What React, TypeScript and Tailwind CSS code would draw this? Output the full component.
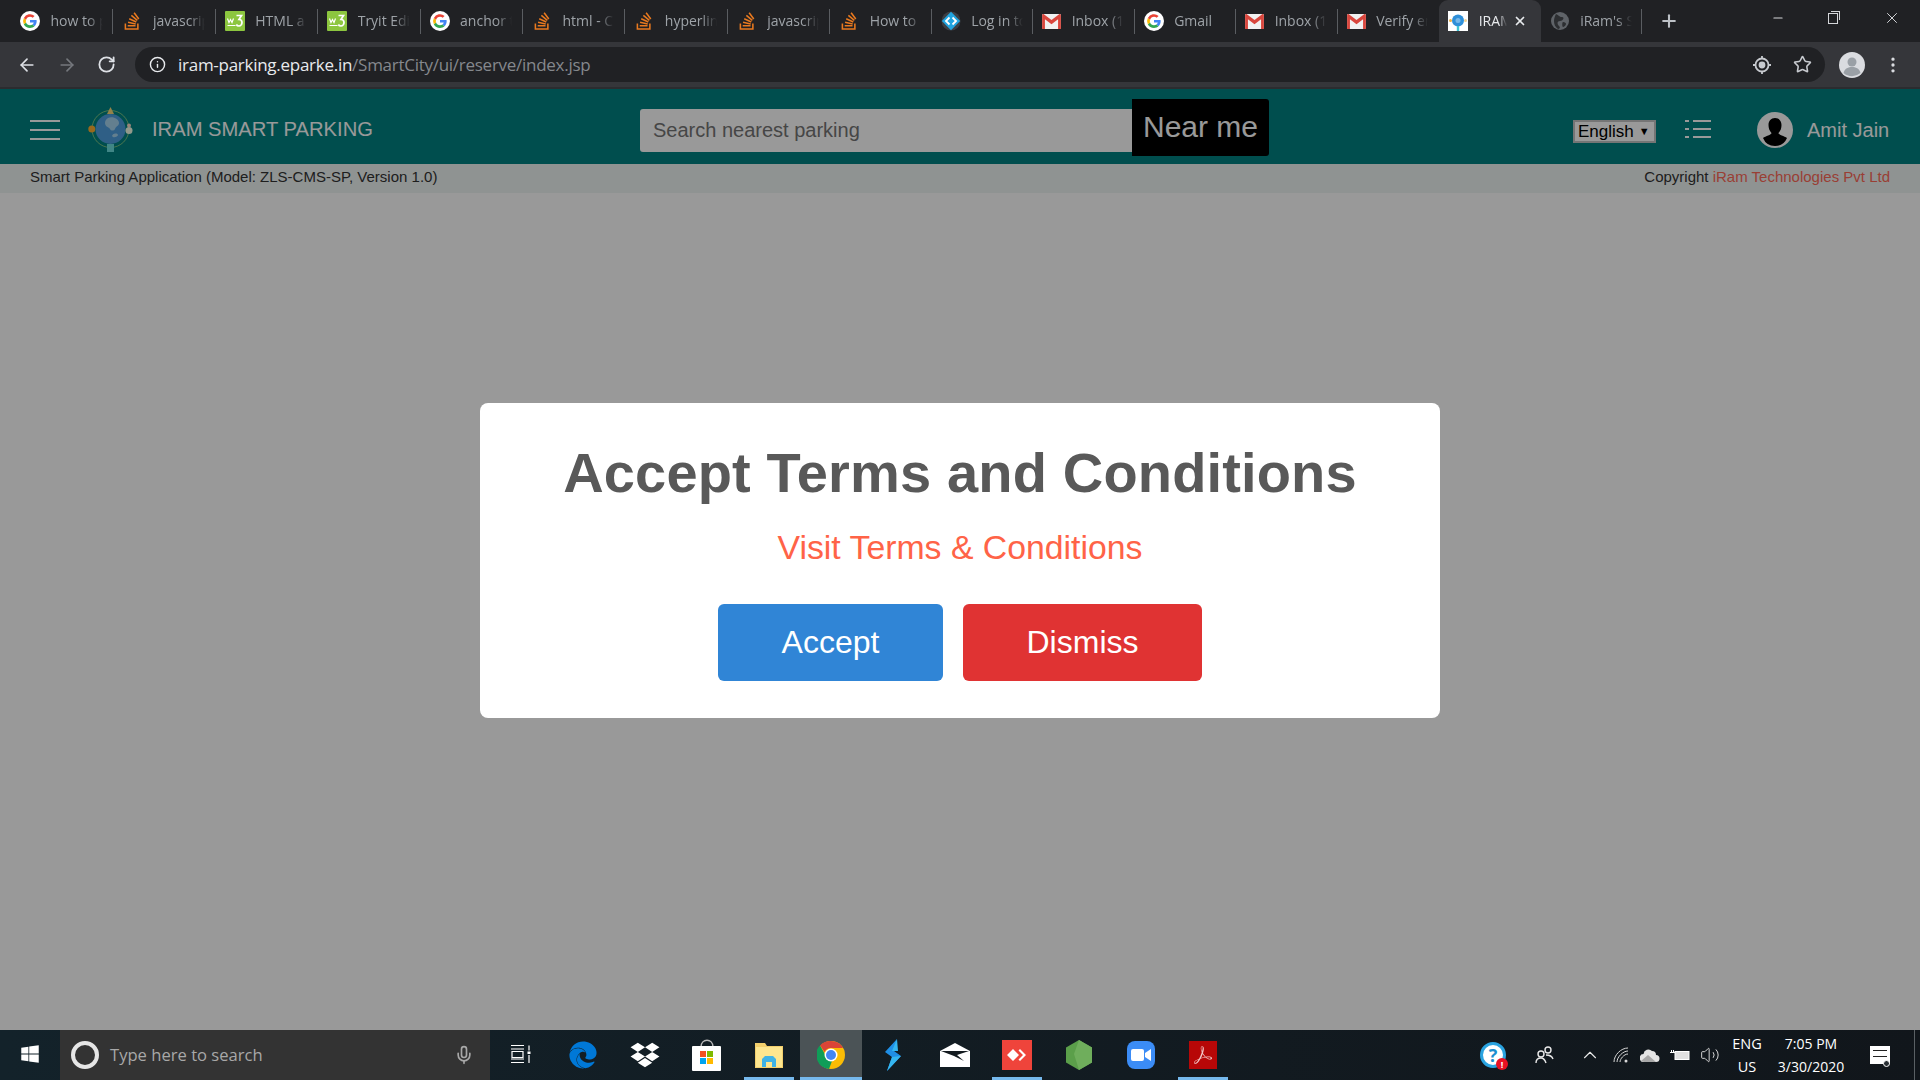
import { ArrowLeft, ArrowRight, RotateCw, Info, Star, Plus, X, Minus, MoreVertical, Mic, ChevronUp, Volume2 } from 'lucide-react'
import { FaStackOverflow, FaDropbox, FaEdge, FaWindows } from 'react-icons/fa'
import { SiAdobeacrobatreader } from 'react-icons/si'

const UI_FONT = "font-['Open_Sans',sans-serif]"

function GoogleIcon() {
  return (
    <svg viewBox="0 0 24 24" className="w-5 h-5">
      <circle cx="12" cy="12" r="12" fill="#fff" />
      <path fill="#4285f4" d="M20 12.3c0-.6 0-1.1-.2-1.6H12v3h4.500a3.900 3.900 0 0 1-1.700 2.500l2.600 2c1.600-1.400 2.600-3.500 2.600-5.900z" />
      <path fill="#34a853" d="M12 20.300c2.200 0 4.100-.7 5.400-2l-2.600-2c-.7.5-1.700.8-2.800.8-2.200 0-4-1.400-4.700-3.400L4.600 15.800a8.300 8.300 0 0 0 7.400 4.500z" />
      <path fill="#fbbc05" d="M7.300 13.700a5 5 0 0 1 0-3.300L4.600 8.300a8.300 8.300 0 0 0 0 7.500z" />
      <path fill="#ea4335" d="M12 7c1.200 0 2.300.4 3.200 1.200l2.300-2.300A8.300 8.300 0 0 0 4.600 8.300l2.700 2.100C8 8.400 9.800 7 12 7z" />
    </svg>
  )
}

function W3Icon() {
  return (
    <svg viewBox="0 0 20 20" className="w-5 h-5">
      <rect width="20" height="20" rx="1" fill="#8cc63f" />
      <path d="M2.500 7.500l1.500 4 1.500-3 1.500 3 1.500-4" fill="none" stroke="#fff" strokeWidth="1.200" />
      <path d="M11.500 4.500h5l-2.500 4c2.500 0 3 1.500 3 3 0 2-1.500 3.500-3 3.500-1.200 0-2.200-.6-2.700-1.500" fill="none" stroke="#fff" strokeWidth="1.700" />
      <path d="M2.500 14.500h8" stroke="#fff" strokeWidth="1" />
    </svg>
  )
}

function GmailIcon() {
  return (
    <svg viewBox="0 0 20 16" className="w-[19px] h-[15px]">
      <rect width="20" height="16" rx="1" fill="#f1f1f1" />
      <path d="M0 1.500C0 .5.800 0 1.500 0L10 6.500 18.500 0C19.200 0 20 .5 20 1.500V16h-3V5.500L10 11 3 5.500V16H0z" fill="#d9463d" />
    </svg>
  )
}

function TabIcon({ kind }: { kind: string }) {
  if (kind === 'g') return <GoogleIcon />
  if (kind === 'so') return <FaStackOverflow className="w-5 h-5 text-[#e8791f]" />
  if (kind === 'w3') return <W3Icon />
  if (kind === 'm') return <GmailIcon />
  if (kind === 'code') {
    return (
      <svg viewBox="0 0 20 20" className="w-5 h-5">
        <circle cx="10" cy="10" r="9.500" fill="#3c3f44" />
        <rect x="3.500" y="3.500" width="13" height="13" fill="#21a5e0" transform="rotate(45 10 10)" />
        <path d="M8.500 6.500L5 10l3.500 3.500M11.500 6.500L15 10l-3.500 3.500" fill="none" stroke="#fff" strokeWidth="1.800" />
      </svg>
    )
  }
  if (kind === 'iram') {
    return (
      <svg viewBox="0 0 20 20" className="w-5 h-5">
        <rect width="20" height="20" fill="#fff" />
        <circle cx="10" cy="9.500" r="6" fill="#2f8fd8" />
        <circle cx="10" cy="9.500" r="2.500" fill="#76b8ea" />
        <rect x="8.800" y="15" width="2.400" height="5" fill="#3fc4d4" />
        <circle cx="2.500" cy="9.500" r="1.500" fill="#f0b040" />
        <circle cx="17.500" cy="9.500" r="1.500" fill="#f0d090" />
      </svg>
    )
  }
  return (
    <svg viewBox="0 0 20 20" className="w-5 h-5">
      <circle cx="10" cy="10" r="9" fill="#5f6368" />
      <path d="M6 3c3 1 3 3 6 3s1 4-2 4-3 3-1 5 0 3-1 3c-3-2-4-5-4-8s1-5 2-7zM13 11c2 0 3 1 3 2s-2 3-3 3-1-5 0-5z" fill="#2c2e31" />
    </svg>
  )
}

const TABS = [
  { title: 'how to position', icon: 'g' },
  { title: 'javascript', icon: 'so' },
  { title: 'HTML a', icon: 'w3' },
  { title: 'Tryit Editor', icon: 'w3' },
  { title: 'anchor tag', icon: 'g' },
  { title: 'html - C', icon: 'so' },
  { title: 'hyperlink', icon: 'so' },
  { title: 'javascript', icon: 'so' },
  { title: 'How to', icon: 'so' },
  { title: 'Log in to', icon: 'code' },
  { title: 'Inbox (1', icon: 'm' },
  { title: 'Gmail', icon: 'g' },
  { title: 'Inbox (1', icon: 'm' },
  { title: 'Verify email', icon: 'm' },
  { title: 'IRAM', icon: 'iram', active: true },
  { title: "iRam's S", icon: 'globe' },
]

function TabStrip() {
  return (
    <div className="h-[42px] bg-[#202124] flex items-stretch pl-[11px] shrink-0">
      {TABS.map((tab, i) => (
        <div
          key={i}
          className={`${i < 8 ? 'w-[102.4px]' : 'w-[101.5px]'} shrink-0 flex items-center pl-[9px] relative ${tab.active ? 'bg-[#35363a] rounded-t-[9px]' : ''}`}
        >
          <TabIcon kind={tab.icon} />
          <span
            className={`ml-[10.500px] -mt-[1px] ${tab.active ? 'w-[28px] text-[#e8eaed]' : 'w-[52px] text-[#9ea3a8]'} overflow-hidden whitespace-nowrap text-[14px] ${UI_FONT} [mask-image:linear-gradient(to_right,#000_70%,transparent)]`}
          >
            {tab.title}
          </span>
          {tab.active && <X size={14} strokeWidth={3} className="absolute right-[14px] top-[14px] text-[#e8eaed]" />}
          {!tab.active && i !== 13 && <div className="absolute right-0 top-[9px] h-[25px] w-px bg-[#5a5d61]" />}
        </div>
      ))}
      <div className="ml-[17px] flex items-center">
        <Plus size={20} strokeWidth={2.500} className="text-[#bdc1c6]" />
      </div>
      <div className="ml-auto flex items-start text-[#d5d7da]">
        <div className="w-[56px] h-[36px] flex items-center justify-center"><Minus size={14} /></div>
        <div className="w-[56px] h-[36px] flex items-center justify-center pr-[2px]">
          <div className="w-[10px] h-[11px] border border-[#d5d7da] relative">
            <div className="absolute -top-[3px] -right-[3px] w-[9px] h-[9px] border-t border-r border-[#d5d7da]" />
          </div>
        </div>
        <div className="w-[58px] h-[36px] flex items-center justify-center pl-[2px]"><X size={18} strokeWidth={1.300} /></div>
      </div>
    </div>
  )
}

function Toolbar() {
  return (
    <div className="h-[47px] bg-[#35363a] border-b-2 border-[#2b2c2f] flex items-start pt-[5px] shrink-0">
      <div className="w-[135px] h-[35px] flex items-center pl-[17px] gap-[20px]">
        <ArrowLeft size={20} className="text-[#dee1e6]" />
        <ArrowRight size={20} className="text-[#75787d]" />
        <RotateCw size={19} className="text-[#dee1e6]" strokeWidth={2.300} />
      </div>
      <div className="w-[1690px] h-[35px] rounded-full bg-[#202124] flex items-center pl-[14px] pr-[13px]">
        <Info size={17} className="text-[#e8eaed]" />
        <span className={`ml-[12px] text-[17px] tracking-[-0.27px] ${UI_FONT} text-[#e8eaed]`}>
          iram-parking.eparke.in<span className="text-[#85888d]">/SmartCity/ui/reserve/index.jsp</span>
        </span>
        <div className="ml-auto flex items-center gap-[21px] text-[#c7cacf]">
          <svg viewBox="0 0 20 20" className="w-5 h-5" fill="none" stroke="currentColor" strokeWidth="1.800">
            <circle cx="10" cy="10" r="6.500" />
            <circle cx="10" cy="10" r="2.500" fill="currentColor" />
            <path d="M10 1v2.500M10 16.500V19M1 10h2.500M16.500 10H19" />
          </svg>
          <Star size={19} />
        </div>
      </div>
      <div className="flex-1 h-[35px] flex items-center pl-[14px]">
        <svg viewBox="0 0 26 26" className="w-[26px] h-[26px] shrink-0">
          <circle cx="13" cy="13" r="13" fill="#dadce0" />
          <circle cx="13" cy="10" r="4.500" fill="#9aa0a6" />
          <path d="M4.500 21c1-4.500 5-6 8.500-6s7.500 1.500 8.500 6a13 13 0 0 1-17 0z" fill="#9aa0a6" />
        </svg>
        <MoreVertical size={20} className="ml-[18px] shrink-0 text-[#dadce0]" />
      </div>
    </div>
  )
}

function ParkingLogo() {
  return (
    <svg viewBox="0 0 45 46" className="w-[45px] h-[46px]">
      <circle cx="22.500" cy="22" r="18.500" fill="none" stroke="#9bd482" strokeWidth="0.800" />
      <circle cx="22.500" cy="22" r="15" fill="#4f9fe0" />
      <path d="M20 11c5-2 11 1 11 5 0 3-3 3-4 6-1 2-4 2-5 0s-5-2-5-6c0-2 1-4 3-5zM26 27c2-1 4 0 4 1s-3 3-5 2 0-3 1-3z" fill="#a6d4ee" />
      <path d="M22.500 0l3.500 7h-7z" fill="#f5d97a" />
      <circle cx="3.800" cy="22" r="3.500" fill="#ffb030" />
      <circle cx="41" cy="23.500" r="3.500" fill="#f4ffe8" />
      <circle cx="41" cy="18.500" r="2" fill="#ffdcc8" />
      <rect x="19" y="37" width="7" height="8" fill="#69e0e0" />
    </svg>
  )
}

function Header() {
  return (
    <header className="h-[75px] bg-[#008383] flex items-center px-[30px] pt-[6px] shrink-0">
      <div className="w-[30px] flex flex-col gap-[7px]">
        <div className="h-[2px] bg-white" />
        <div className="h-[2px] bg-white" />
        <div className="h-[2px] bg-white" />
      </div>
      <div className="ml-[28px]"><ParkingLogo /></div>
      <span className="ml-[19px] w-[488px] text-[20.200px] text-white font-['Liberation_Sans',sans-serif]">IRAM SMART PARKING</span>
      <div className="flex items-start -mt-[4px] font-['Liberation_Sans',sans-serif]">
        <div className="w-[492px] h-[43px] mt-[10px] pb-[2px] bg-white rounded-l-[3px] flex items-center pl-[13px] text-[20px] text-[#757575]">
          Search nearest parking
        </div>
        <div className="w-[137px] h-[57px] bg-black rounded-r-[3px] flex items-center justify-center pb-[2px] text-[30px] text-white">
          Near me
        </div>
      </div>
      <div className="ml-[304px] mt-[4px] w-[83px] h-[23px] bg-white border-2 border-[#c4c4c4] flex items-center pl-[3px] text-[17px] text-black font-['Liberation_Sans',sans-serif]">
        English<span className="ml-[5px] text-[11px]">▼</span>
      </div>
      <svg viewBox="0 0 26 18" className="ml-[29px] -mt-[2px] w-[26px] h-[18px]" stroke="#fff" strokeWidth="2" fill="none">
        <path d="M0 1h4M8 1h18M0 9h4M8 9h18M0 17h4M8 17h18" />
      </svg>
      <svg viewBox="0 0 36 36" className="ml-[46px] w-[36px] h-[36px]">
        <circle cx="18" cy="18" r="18" fill="#fff" />
        <path d="M18 6c4 0 6.500 3 6.500 7 0 3-1 6-3 8 0 2 6 3 8.500 5a13 13 0 0 1-24 0c2.500-2 8.500-3 8.500-5-2-2-3-5-3-8 0-4 2.500-7 6.500-7z" fill="#000" />
      </svg>
      <span className="ml-[14px] text-[20px] text-white font-['Liberation_Sans',sans-serif]">Amit Jain</span>
    </header>
  )
}

function TermsModal() {
  return (
    <div className="absolute inset-0 bg-black/40 flex items-center justify-center pt-[2px]">
      <div className="w-[960px] h-[315px] bg-white rounded-[8px] flex flex-col items-center font-['Liberation_Sans',sans-serif]">
        <h2 className="mt-[32px] text-[56px] leading-[76px] font-bold text-[#595959] tracking-[0.16px]">Accept Terms and Conditions</h2>
        <a className="mt-[16px] text-[33.800px] leading-[40px] text-[#ff6347]">Visit Terms &amp; Conditions</a>
        <div className="mt-[37px] flex gap-[20px]">
          <button className="w-[225px] h-[77px] pb-[2px] rounded-[6px] bg-[#3085d6] text-white text-[32px]">Accept</button>
          <button className="w-[239px] h-[77px] pb-[2px] rounded-[6px] bg-[#e03333] text-white text-[32px]">Dismiss</button>
        </div>
      </div>
    </div>
  )
}

function Page() {
  return (
    <div className="relative flex-1 bg-white flex flex-col">
      <Header />
      <div className="h-[29px] pb-[2px] bg-[#eef5f4] flex items-center justify-between px-[30px] text-[15px] text-[#333333] font-['Liberation_Sans',sans-serif]">
        <span>Smart Parking Application (Model: ZLS-CMS-SP, Version 1.0)</span>
        <span>Copyright <span className="text-[#ff6a58]">iRam Technologies Pvt Ltd</span></span>
      </div>
      <TermsModal />
    </div>
  )
}

function ChromeIcon() {
  return (
    <svg viewBox="0 0 28 28" className="w-[28px] h-[28px]">
      <circle cx="14" cy="14" r="14" fill="#fbbc05" />
      <path d="M14 0a14 14 0 0 1 12.100 7H14a7 7 0 0 0-6.400 4L3 4.500A14 14 0 0 1 14 0z" fill="#db4437" />
      <path d="M3 4.500L9 15a6 6 0 0 0 6 5l-3 8A14 14 0 0 1 3 4.500z" fill="#0f9d58" />
      <circle cx="14" cy="14" r="6.500" fill="#fff" />
      <circle cx="14" cy="14" r="5" fill="#4285f4" />
    </svg>
  )
}

function Slot({ children, active, open }: { children: React.ReactNode; active?: boolean; open?: boolean }) {
  return (
    <div className={`relative w-[62px] h-[50px] flex items-center justify-center ${active ? 'bg-[#4b5356]' : ''}`}>
      {children}
      {open && <div className={`absolute bottom-0 h-[3px] bg-[#76b9ed] ${active ? 'inset-x-0' : 'inset-x-[6px]'}`} />}
    </div>
  )
}

function Taskbar() {
  return (
    <footer className={`h-[50px] bg-gradient-to-r from-[#13222a] to-[#11161b] flex items-stretch shrink-0 ${UI_FONT}`}>
      <div className="w-[60px] flex items-center justify-center pb-[2px]">
        <FaWindows className="w-[20px] h-[20px] text-white" />
      </div>
      <div className="w-[430px] bg-[#333333] flex items-center pl-[11px] pr-[16px]">
        <div className="w-[28px] h-[28px] rounded-full border-[4px] border-[#e6e6e6]" />
        <span className="ml-[11px] text-[16.600px] text-[#a8a8a8]">Type here to search</span>
        <Mic size={20} className="ml-auto text-[#a8a8a8]" />
      </div>
      <Slot>
        <svg viewBox="0 0 20 20" className="w-[20px] h-[20px]" fill="none" stroke="#fff" strokeWidth="1.200">
          <path d="M0 .5h13M0 4h13M0 14h13M0 17.500h13M1 6.500h11v6H1zM18 .5v5M18 10v8" />
          <rect x="16.500" y="6.500" width="3" height="2.500" fill="#fff" stroke="none" />
        </svg>
      </Slot>
      <Slot><FaEdge className="w-[28px] h-[28px] text-[#0078d7]" /></Slot>
      <Slot><FaDropbox className="w-[30px] h-[28px] text-white" /></Slot>
      <Slot>
        <svg viewBox="0 0 30 32" className="w-[30px] h-[32px]">
          <path d="M9 8c0-9 12-9 12 0" fill="none" stroke="#b9b9b9" strokeWidth="1.500" />
          <rect y="7" width="29" height="25" rx="1" fill="#fff" />
          <rect x="8" y="12" width="6" height="6" fill="#f25022" />
          <rect x="15" y="12" width="6" height="6" fill="#7fba00" />
          <rect x="8" y="19" width="6" height="6" fill="#00a4ef" />
          <rect x="15" y="19" width="6" height="6" fill="#ffb900" />
        </svg>
      </Slot>
      <Slot open>
        <svg viewBox="0 0 28 26" className="w-[28px] h-[26px]">
          <path d="M0 1h10l2 3h16v22H0z" fill="#f3cf6c" />
          <rect x="1" y="5" width="26" height="20" fill="#fde68f" />
          <path d="M7 25v-8l3-3h8l3 3v8h-4v-5h-6v5z" fill="#3fb3e6" />
        </svg>
      </Slot>
      <Slot active open><ChromeIcon /></Slot>
      <Slot>
        <svg viewBox="0 0 18 32" className="w-[18px] h-[32px]">
          <path d="M13 0L1 13l7 5-5 14 14-15-7-5z" fill="#1f8fe6" />
          <path d="M13 0L8 12l6 0z M8 18l9-1-14 15z" fill="#35b6f0" />
        </svg>
      </Slot>
      <Slot>
        <svg viewBox="0 0 30 24" className="w-[30px] h-[24px]">
          <path d="M0 8L15 0l15 8v16H0z" fill="#fff" />
          <path d="M1 8h28L17 12l7 6-10-5z" fill="#131a1f" />
        </svg>
      </Slot>
      <Slot open>
        <div className="w-[30px] h-[30px] bg-[#ef443b] flex items-center justify-center">
          <svg viewBox="0 0 20 14" className="w-[20px] h-[14px]" fill="#fff">
            <path d="M6 1l6 6-6 6-6-6zM13 1l6 6-6 6-1.500-1.500L16 7l-4.500-4.500z" />
          </svg>
        </div>
      </Slot>
      <Slot>
        <svg viewBox="0 0 26 30" className="w-[26px] h-[30px]">
          <path d="M13 0l13 7.500v15L13 30 0 22.500v-15z" fill="#5b9f4a" />
          <path d="M13 0l13 7.500v15L13 30 8 14z" fill="#6fae5c" />
        </svg>
      </Slot>
      <Slot>
        <div className="w-[28px] h-[28px] rounded-[8px] bg-[#3b8cf6] flex items-center justify-center">
          <svg viewBox="0 0 20 12" className="w-[20px] h-[12px]" fill="#fff">
            <rect width="13" height="12" rx="2" />
            <path d="M14 4l6-4v12l-6-4z" />
          </svg>
        </div>
      </Slot>
      <Slot open>
        <div className="w-[28px] h-[28px] bg-[#b70707] flex items-center justify-center">
          <SiAdobeacrobatreader className="w-[18px] h-[18px] text-[#f3c9c9]" />
        </div>
      </Slot>

      <div className="ml-auto flex items-stretch text-white">
        <div className="w-[50px] flex items-center justify-center">
          <div className="relative w-[26px] h-[26px] rounded-full bg-white border-[3px] border-[#2aa3e0] flex items-center justify-center text-[18px] font-bold text-[#1b8fd0] leading-none">
            ?
            <div className="absolute -right-[5px] -bottom-[5px] w-[12px] h-[12px] rounded-full bg-[#e81123] text-white text-[9px] flex items-center justify-center">!</div>
          </div>
        </div>
        <div className="w-[54px] flex items-center justify-center">
          <svg viewBox="0 0 20 20" className="w-[20px] h-[20px]" fill="none" stroke="#e8e8e8" strokeWidth="1.400">
            <circle cx="13" cy="5" r="3" />
            <circle cx="6" cy="9" r="3" />
            <path d="M1 18c0-3 2-5 5-5s4 2 5 5M11 10c3 0 6 1 7 4" />
          </svg>
        </div>
        <div className="w-[36px] flex items-center justify-center"><ChevronUp size={22} strokeWidth={1.200} className="text-[#e8e8e8]" /></div>
        <div className="w-[26px] flex items-center justify-center">
          <svg viewBox="0 0 16 16" className="w-[16px] h-[16px]" fill="none" stroke="#d8d8d8" strokeWidth="1">
            <path d="M1 15C1 8 8 1 15 1M4 15c0-5 6-11 11-11M7 15c0-3 4-8 8-8" />
            <circle cx="13" cy="14" r="1.500" fill="#d8d8d8" stroke="none" />
          </svg>
        </div>
        <div className="w-[32px] flex items-center justify-center">
          <svg viewBox="0 0 20 14" className="w-[20px] h-[14px]">
            <path d="M4 14a4 4 0 0 1-.5-8A5 5 0 0 1 12 3a4 4 0 0 1 4 4 3.500 3.500 0 0 1 0 7z" fill="#e4e4e4" />
            <path d="M1 13l7-6 8 7H4z" fill="#a7a7a7" />
          </svg>
        </div>
        <div className="w-[28px] flex items-center justify-center">
          <svg viewBox="0 0 20 12" className="w-[20px] h-[12px]">
            <rect x="5" y="2.500" width="14" height="8" fill="#e0e0e0" stroke="#fff" />
            <path d="M0 3.500h5M1.500 1v3M3.500 1v3" stroke="#fff" fill="none" />
          </svg>
        </div>
        <div className="w-[32px] flex items-center justify-center"><Volume2 size={20} strokeWidth={1.100} className="text-[#e8e8e8]" /></div>
        <div className="w-[42px] flex flex-col items-center justify-center text-[14.500px] leading-[23px]">
          <span>ENG</span>
          <span>US</span>
        </div>
        <div className="w-[86px] flex flex-col items-center justify-center text-[14px] leading-[23px]">
          <span>7:05 PM</span>
          <span>3/30/2020</span>
        </div>
        <div className="w-[52px] flex items-center justify-center">
          <div className="relative w-[20px] h-[18px] bg-white">
            <div className="mt-[4px] ml-[3px] w-[14px] h-[7px] border-y border-[#222]" />
            <div className="absolute -bottom-[3px] right-0 w-[7px] h-[7px] rounded-full bg-[#2a3035] border border-white" />
          </div>
        </div>
        <div className="w-[14px] flex justify-end pr-[5px]"><div className="w-px bg-[#5a6064]" /></div>
      </div>
    </footer>
  )
}

export default function App() {
  return (
    <div className="w-[1920px] h-[1080px] flex flex-col overflow-hidden">
      <TabStrip />
      <Toolbar />
      <Page />
      <Taskbar />
    </div>
  )
}
